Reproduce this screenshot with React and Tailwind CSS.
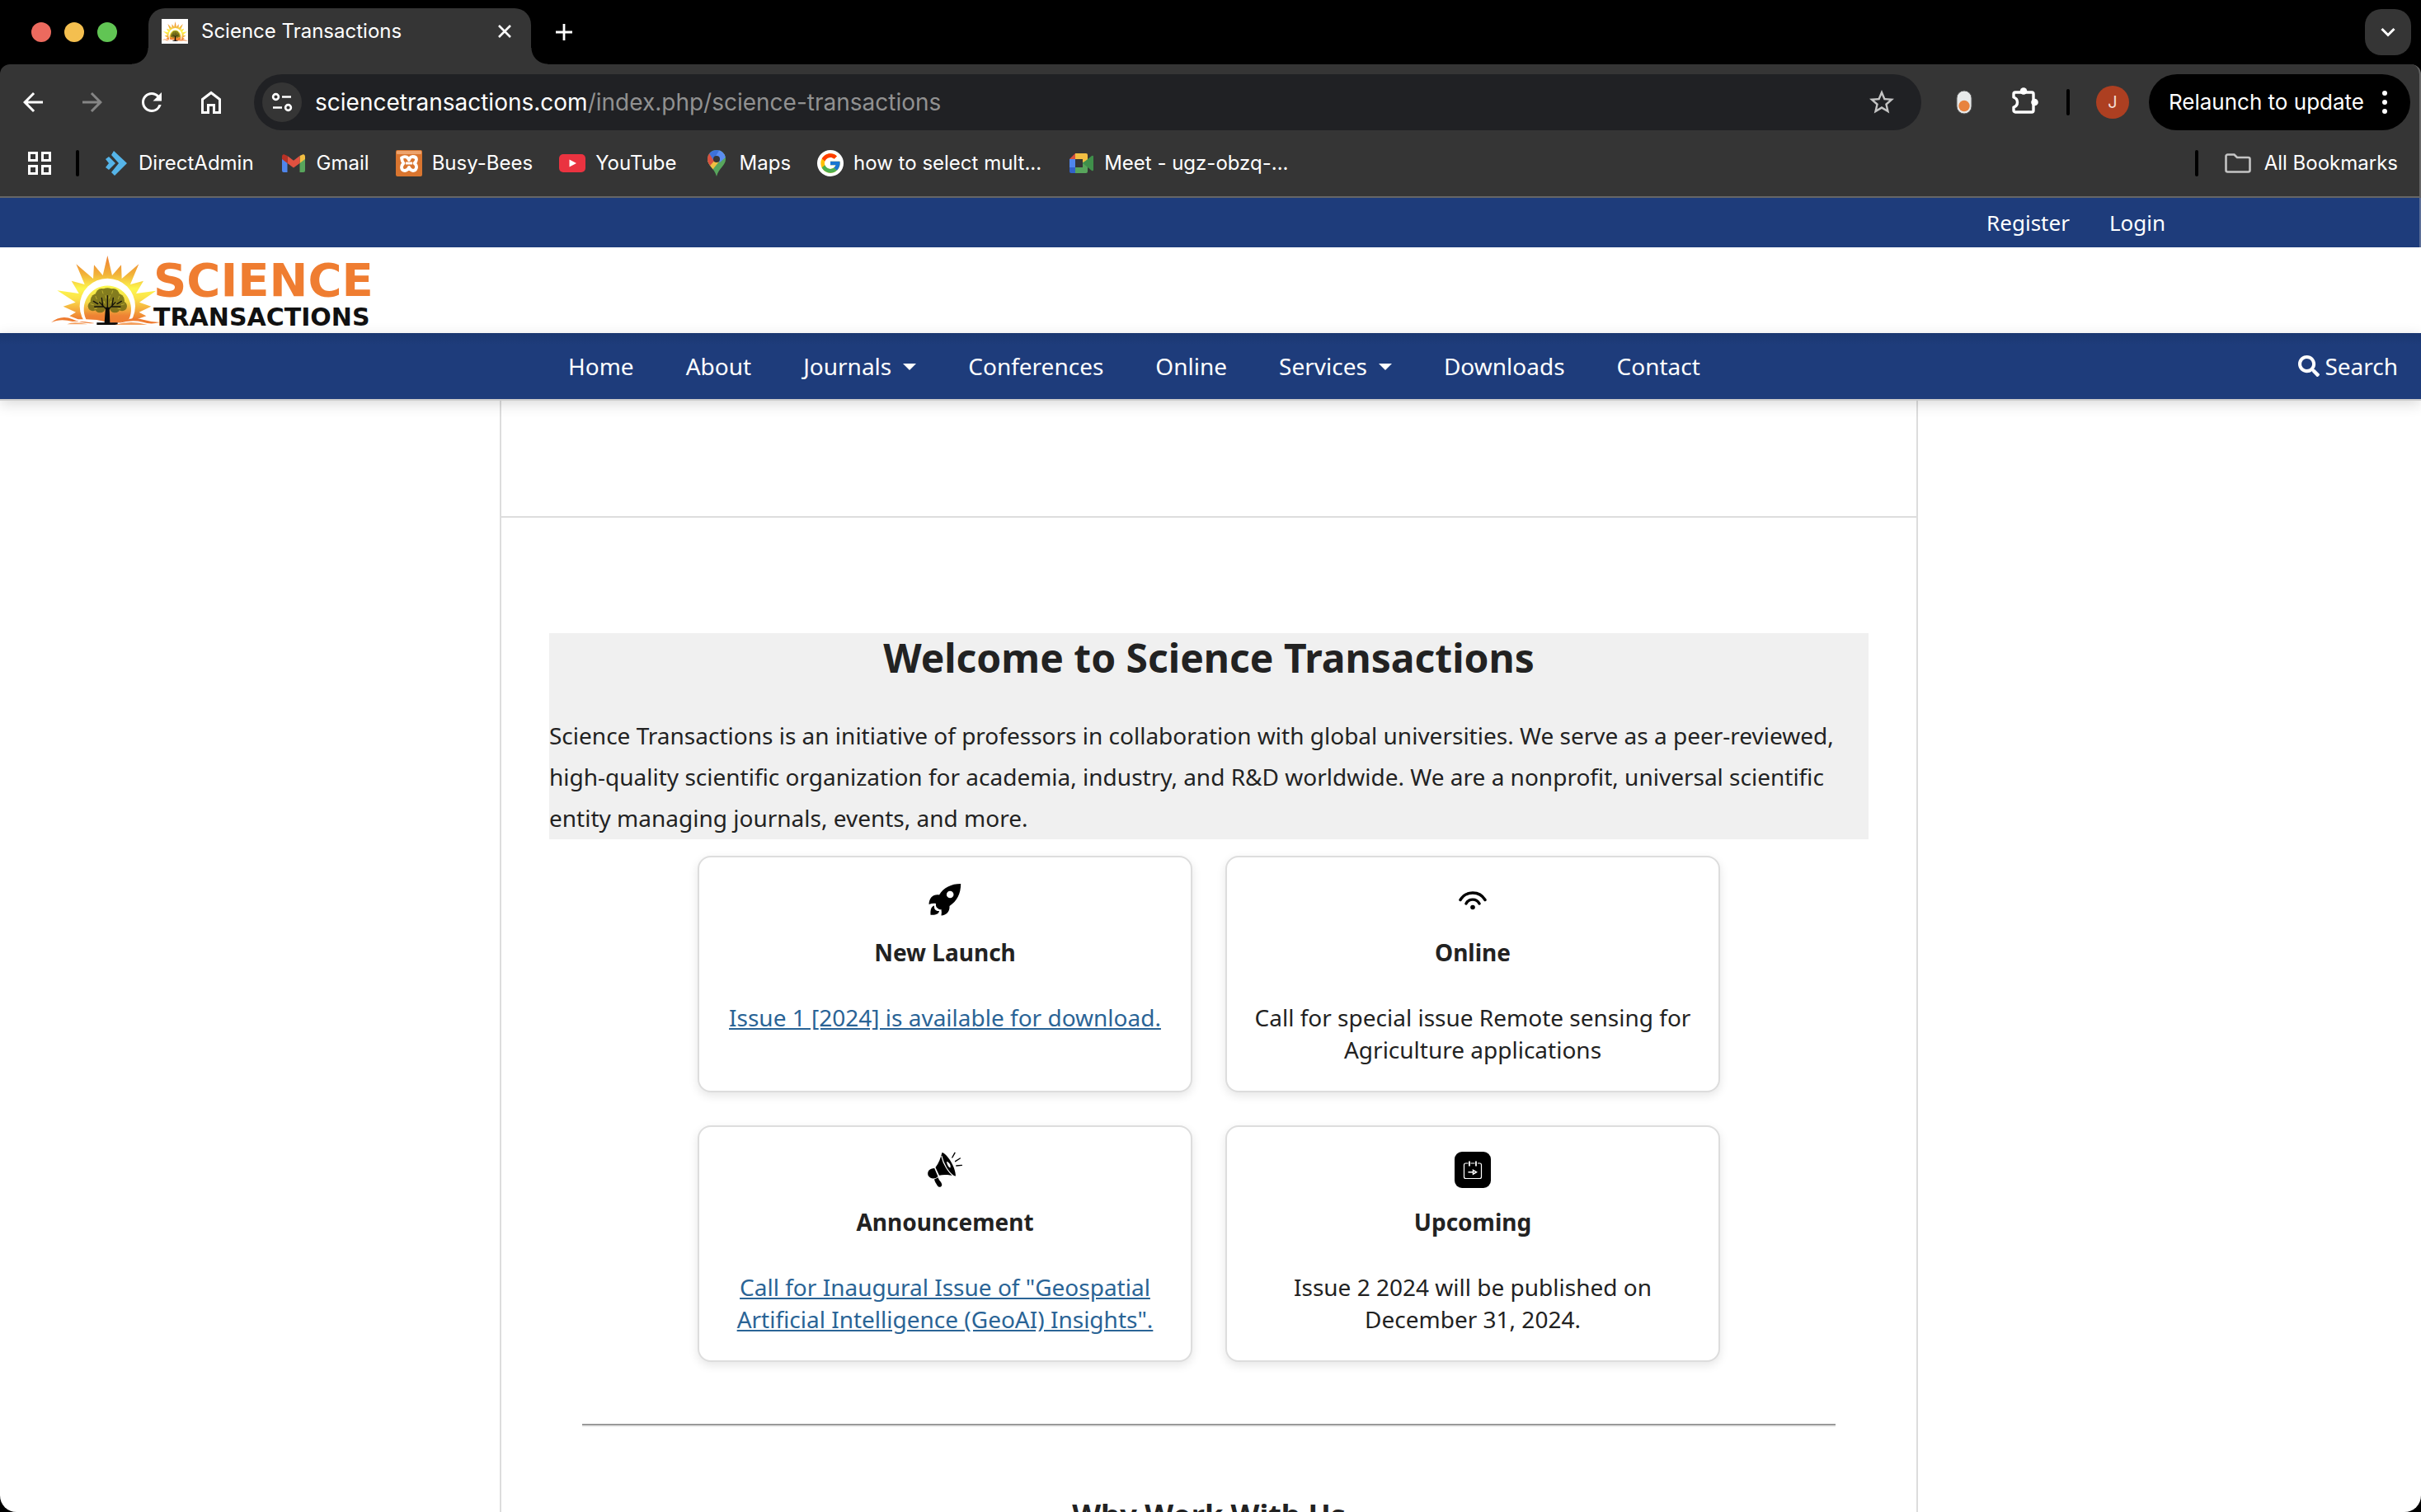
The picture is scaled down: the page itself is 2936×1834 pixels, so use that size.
import React from "react";
import { MdArrowBack, MdArrowForward, MdRefresh, MdStarOutline } from "react-icons/md";
import { FcGoogle } from "react-icons/fc";
import { FaSearch } from "react-icons/fa";

/* ---------- Brand drawings ---------- */

function SunTree({ className, id }) {
  return (
    <svg viewBox="38 30 396 252" preserveAspectRatio="none" className={className} aria-hidden="true">
      <defs>
        <linearGradient id={`${id}-rays`} x1="0" y1="0" x2="0" y2="1">
          <stop offset="0" stopColor="#ef7d31" />
          <stop offset="0.3" stopColor="#f2b43a" />
          <stop offset="0.52" stopColor="#fdf74d" />
          <stop offset="0.68" stopColor="#fbe04a" />
          <stop offset="1" stopColor="#ee7b30" />
        </linearGradient>
        <linearGradient id={`${id}-disc`} x1="0" y1="0" x2="0" y2="1">
          <stop offset="0" stopColor="#fbf84c" />
          <stop offset="0.45" stopColor="#f3d745" />
          <stop offset="0.8" stopColor="#ee8334" />
          <stop offset="1" stopColor="#ee7b30" />
        </linearGradient>
      </defs>
      <path
        fill={`url(#${id}-rays)`}
        d="M105 250 L128 236 L82 215 L127 200 L60 157 L139 168 L112 122 L160 135 L129 61 L191 114 L194 64 L226 102 L243 30 L260 102 L293 64 L295 114 L357 61 L326 135 L374 122 L347 168 L420 158 L359 200 L402 215 L358 236 L384 250 L350 262 L136 262 Z"
      />
      <circle cx="243" cy="214" r="101" fill="#fff" />
      <path d="M165 262 A86 86 0 1 1 321 262 Q282 282 243 272 Q204 262 165 262 Z" fill={`url(#${id}-disc)`} />
      <g fill="#6f6a17" opacity="0.85">
        <circle cx="243" cy="184" r="36" />
        <circle cx="208" cy="194" r="27" />
        <circle cx="278" cy="194" r="27" />
        <circle cx="190" cy="214" r="18" />
        <circle cx="296" cy="214" r="18" />
        <circle cx="222" cy="172" r="22" />
        <circle cx="264" cy="172" r="22" />
        <circle cx="216" cy="218" r="20" />
        <circle cx="270" cy="218" r="20" />
      </g>
      <g stroke="#e9d53f" strokeWidth="3" opacity="0.55" strokeLinecap="round">
        <path d="M200 178l4 10M224 158l3 10M262 158l-3 10M286 178l-4 10M182 206l10 3M304 206l-10 3M212 200l7 8M274 200l-7 8M236 176l3 10M252 176l-3 10M196 224l9-2M290 224l-9-2M230 196l3 8M256 196l-3 8" />
      </g>
      <g stroke="#15130a" fill="none" strokeLinecap="round">
        <path strokeWidth="4" d="M242 228 L214 200 M244 228 L272 200 M243 226 V176 M230 216 L196 216 M256 216 L290 216 M226 212 L222 184 M260 212 L264 184 M208 206 L192 196 M278 206 L294 196" />
      </g>
      <path d="M236 218 h14 l2 56 h28 v8 h-76 v-8 h28 z" fill="#0b0a08" />
      <path d="M38 274 Q74 244 116 262 T196 276 Q150 268 116 270 Q70 258 38 274 Z" fill="#ee7b30" />
      <path d="M284 276 Q330 250 376 264 Q402 272 434 273 Q400 282 372 272 Q330 262 284 276 Z" fill="#ee7b30" />
      <path d="M96 280 Q120 268 170 280 Z M270 282 Q330 264 388 282 Z" fill="#f4a05f" />
    </svg>
  );
}

/* ---------- Browser icons ---------- */

const ChromeHome = () => (
  <svg viewBox="0 0 32 32" className="h-8 w-8" fill="none" stroke="currentColor" strokeWidth="3" aria-hidden="true">
    <path d="M5.500 12.500 L16 4.500 L26.500 12.500 V28.500 H19.500 V19.500 H12.500 V28.500 H5.500 Z" />
  </svg>
);

const SiteSettings = () => (
  <svg viewBox="0 0 28 28" className="h-7 w-7" fill="none" stroke="currentColor" strokeWidth="2.6" aria-hidden="true">
    <circle cx="6.500" cy="7.500" r="3.400" />
    <path d="M14 7.500h11M3 20.500h11" />
    <circle cx="21.500" cy="20.500" r="3.400" />
  </svg>
);

const Puzzle = () => (
  <svg viewBox="0 0 36 36" className="h-9 w-9" aria-hidden="true">
    <path
      d="M4 24 C10 22 10 14 4 12 V8 a2 2 0 0 1 2-2 H26 a2 2 0 0 1 2 2 V28 a2 2 0 0 1 -2 2 H6 a2 2 0 0 1 -2-2 Z"
      fill="none" stroke="currentColor" strokeWidth="3.4" strokeLinejoin="round"
    />
    <circle cx="16" cy="4.500" r="4.300" fill="currentColor" />
    <circle cx="29.500" cy="18" r="4.300" fill="currentColor" />
  </svg>
);

const Capsule = () => (
  <svg viewBox="0 0 20 32" className="h-8 w-5" aria-hidden="true">
    <rect x="1" y="2" width="18" height="28" rx="9" fill="#e8eaea" stroke="#5a5a5a" />
    <circle cx="10" cy="20.500" r="6.700" fill="#e8833f" />
  </svg>
);

const AppsGrid = () => (
  <svg viewBox="0 0 28 28" className="h-7 w-7" fill="none" stroke="currentColor" strokeWidth="3" aria-hidden="true">
    <path d="M1.500 1.500h9v9h-9zM17.500 1.500h9v9h-9zM1.500 17.500h9v9h-9zM17.500 17.500h9v9h-9z" />
  </svg>
);

const DirectAdminIcon = () => (
  <svg viewBox="0 0 32 32" className="h-8 w-8" fill="#55b4e8" aria-hidden="true">
    <path d="M14 1 L30 16 L15 31 L11 27 L20 16 L11 6 Z" />
    <path d="M8 8 L16 16 L8 24 L4 21 L8 16 L4 11 Z" />
  </svg>
);

const GmailIcon = () => (
  <svg viewBox="0 0 32 32" className="h-8 w-8" aria-hidden="true">
    <path d="M2 10 V25 a2 2 0 0 0 2 2 H8.500 V15 Z" fill="#4f86ec" />
    <path d="M30 10 V25 a2 2 0 0 1 -2 2 H23.500 V15 Z" fill="#58a55c" />
    <path d="M23.500 7 L27 5.500 C28.500 4.500 30 6 30 8 V11 L23.500 16 Z" fill="#f2be42" />
    <path d="M8.500 7 L16 12.800 L23.500 7 V16 L16 21.500 L8.500 16 Z" fill="#e05140" />
    <path d="M8.500 7 L5 5.500 C3.500 4.500 2 6 2 8 V11 L8.500 16 Z" fill="#b93125" />
  </svg>
);

const BusyBeesIcon = () => (
  <svg viewBox="0 0 32 32" className="h-8 w-8" aria-hidden="true">
    <rect width="32" height="32" rx="2" fill="#d9752f" />
    <rect x="1" y="1" width="30" height="4" rx="1" fill="#eda36c" />
    <path
      d="M7 9.500 Q10 7.500 13 8.500 Q15 9.500 16 12 Q17 8.500 20 8 Q25 8 25 11.500 Q25 14 22.500 16 Q25.500 18 25 21.500 Q24 25 21 25 Q18 25 16 21 Q14 25 11 25 Q7.500 25 7 21.500 Q7 18 9.500 16 Q7.500 14 7 9.500"
      fill="none" stroke="#fff" strokeWidth="3.800" strokeLinecap="round" strokeLinejoin="round"
    />
    <path d="M12 16 H20" stroke="#fff" strokeWidth="3" />
  </svg>
);

const YouTubeIcon = () => (
  <svg viewBox="0 0 32 32" className="h-8 w-8" aria-hidden="true">
    <rect y="5" width="32" height="22" rx="5" fill="#ea3340" />
    <path d="M12.500 11.500 L21 16 L12.500 20.500 Z" fill="#fff" />
  </svg>
);

const MapsIcon = () => (
  <svg viewBox="0 0 32 32" className="h-8 w-8" aria-hidden="true">
    <clipPath id="map-pin">
      <path d="M16 0 C22 0 27 4.500 27 11 C27 19 19 21 16 32 C13 21 5 19 5 11 C5 4.500 10 0 16 0 Z" />
    </clipPath>
    <g clipPath="url(#map-pin)">
      <rect width="32" height="32" fill="#58a55c" />
      <path d="M4 22 L4 14 L13 9 L27 4 L11 24 Z" fill="#f2be42" />
      <path d="M0 16 L0 4 L8 3 L16 10 L8 19 Z" fill="#d85040" />
      <path d="M7 4 L12 -2 L22 0 L12 12 Z" fill="#3d72d9" />
      <path d="M20 -1 L30 6 L20 15 L14 9 Z" fill="#5b8df0" />
    </g>
    <circle cx="16" cy="11" r="4" fill="#353535" />
  </svg>
);

const MeetIcon = () => (
  <svg viewBox="0 0 32 32" className="h-8 w-8" aria-hidden="true">
    <path d="M9 4 V11 H2 Z" fill="#d85040" />
    <path d="M2 11 h7 v10 h-7z" fill="#4f86ec" />
    <path d="M2 21 h7 v7 h-5 a2 2 0 0 1 -2 -2z" fill="#3161c9" />
    <path d="M9 4 h13 a2 2 0 0 1 2 2 v7 l-6 4 v-6 h-9z" fill="#f2be42" />
    <path d="M9 21 h9 v-6 l6 -3 v14 a2 2 0 0 1 -2 2 h-13z" fill="#58a55c" />
    <path d="M18 16 L29 7 Q31 6 31 8 V24 Q31 26 29 25 Z" fill="#3f8f4a" />
  </svg>
);

const GoogleIcon = () => (
  <span className="flex h-8 w-8 items-center justify-center rounded-full bg-white">
    <FcGoogle className="h-7 w-7" />
  </span>
);

const FolderIcon = () => (
  <svg viewBox="0 0 32 24" className="h-6 w-8" fill="none" stroke="#c4c4c4" strokeWidth="2.600" aria-hidden="true">
    <path d="M3.500 1.500 H11.500 L15 5 H28.500 a2 2 0 0 1 2 2 V20.500 a2 2 0 0 1 -2 2 H3.500 a2 2 0 0 1 -2 -2 V3.500 a2 2 0 0 1 2 -2 Z" />
  </svg>
);

/* ---------- Card icons ---------- */

const Rocket = () => (
  <svg viewBox="0 0 44 44" className="h-11 w-11" aria-hidden="true">
    <g transform="translate(2.500 2)">
      <path
        fillRule="evenodd"
        d="M38.700 0 C27 0 18 4.500 12.500 13.500 C5 12.500 .5 17 0 25 C3 23.800 6 23.500 8.500 24 C8 27 9 28.500 10.500 29.500 C12 31 13 31.500 15 31 C15.500 33.500 15.500 36 15 38.500 C21 38 25.500 34 25 27 C34 21 38.700 12 38.700 0 Z M25.700 8.700 a4.300 4.300 0 1 1 0 8.600 a4.300 4.300 0 1 1 0 -8.600 Z"
      />
      <path d="M6.500 26.500 C3 27.500 1.500 31 2 37.700 C8.500 38.200 12 36.500 12.500 33 C8.500 33.500 6 31 6.500 26.500 Z" />
    </g>
  </svg>
);

const Wifi = () => (
  <svg viewBox="0 0 44 44" className="h-11 w-11" fill="none" stroke="#000" strokeWidth="3.400" strokeLinecap="round" aria-hidden="true">
    <path d="M7 21.500 A17.500 17.500 0 0 1 37 21.500" />
    <path d="M14 26 A9 9 0 0 1 30 26" />
    <circle cx="22" cy="30.500" r="2.800" fill="#000" stroke="none" />
  </svg>
);

const Megaphone = () => (
  <svg viewBox="0 0 44 44" className="h-11 w-11" aria-hidden="true">
    <path d="M18.500 1 C24 2 35 18 35 29.500 C28 28 20 27.500 15 28.700 L10.500 19 C14.500 14 16.500 8 18.500 1 Z" />
    <path d="M17.800 5 C20 15 26 25 32.500 29.500" fill="none" stroke="#fff" strokeWidth="1.200" />
    <path d="M24 12 C27 12.500 29.500 16 28.500 19.500 C26.500 19 24.500 16 24 12 Z" fill="#fff" />
    <path d="M9.200 20 L13.500 30 C10 34 3.500 33 1.500 28.500 C0 24 3.500 20 9.200 20 Z" />
    <path d="M9 33.500 L13.800 31.300 C14 34.500 18.500 37 18.300 40.500 C17.500 43.500 14 43.500 12.700 41 C11.500 38.500 9.500 36.500 9 33.500 Z" />
    <path d="M34 1.300 L30.800 7 M40.300 8 L34.600 11.700 M42.400 16.400 L35.800 17" stroke="#000" strokeWidth="1.400" strokeLinecap="round" />
  </svg>
);

const CalendarNext = () => (
  <svg viewBox="0 0 44 44" className="h-11 w-11" fill="none" stroke="#fff" aria-hidden="true">
    <rect width="44" height="44" rx="9" fill="#000" stroke="none" />
    <path strokeWidth="1.200" d="M16.500 14 H13.500 a2 2 0 0 0 -2 2 V30.500 a2 2 0 0 0 2 2 H30.500 a2 2 0 0 0 2 -2 V16 a2 2 0 0 0 -2 -2 H28 M19.500 14 H24.500" />
    <path strokeWidth="1.800" d="M18 11.500 V17.500 M26 11.500 V17.500" />
    <path strokeWidth="1.500" d="M16.500 24.700 H22.500 M22.500 22.300 L26.500 24.700 L22.500 27.100 Z" />
  </svg>
);

/* ---------- Browser chrome ---------- */

const bookmarks = [
  { label: "DirectAdmin", Icon: DirectAdminIcon },
  { label: "Gmail", Icon: GmailIcon },
  { label: "Busy-Bees", Icon: BusyBeesIcon },
  { label: "YouTube", Icon: YouTubeIcon },
  { label: "Maps", Icon: MapsIcon },
  { label: "how to select mult...", Icon: GoogleIcon },
  { label: "Meet - ugz-obzq-...", Icon: MeetIcon },
];

function TabStrip() {
  return (
    <div className="flex h-[78px] items-center pr-3">
      <div className="flex gap-4 pl-[38px]">
        <button aria-label="Close window" className="h-6 w-6 rounded-full bg-[#ec6a5e]" />
        <button aria-label="Minimize window" className="h-6 w-6 rounded-full bg-[#f4bf4f]" />
        <button aria-label="Zoom window" className="h-6 w-6 rounded-full bg-[#61c554]" />
      </div>
      <div className="relative ml-[38px] flex h-[68px] w-[464px] items-center self-end rounded-t-[20px] bg-[#353535] px-4 pb-3">
        <span className="absolute bottom-0 -left-5 h-5 w-5 bg-[radial-gradient(circle_at_0_0,transparent_19px,#353535_20px)]" />
        <span className="absolute -right-5 bottom-0 h-5 w-5 bg-[radial-gradient(circle_at_100%_0,transparent_19px,#353535_20px)]" />
        <span className="flex h-[30px] w-8 items-center bg-white">
          <SunTree id="favicon" className="h-6 w-8" />
        </span>
        <span className="ml-4 flex-1 text-2xl">Science Transactions</span>
        <button aria-label="Close tab" className="flex h-8 w-8 items-center justify-center">
          <svg viewBox="0 0 16 16" className="h-4 w-4" stroke="currentColor" strokeWidth="2.600" aria-hidden="true">
            <path d="M1 1 L15 15 M15 1 L1 15" />
          </svg>
        </button>
      </div>
      <button aria-label="New tab" className="ml-5 flex h-10 w-10 items-center justify-center">
        <svg viewBox="0 0 20 20" className="h-5 w-5" stroke="currentColor" strokeWidth="2.800" aria-hidden="true">
          <path d="M10 0 V20 M0 10 H20" />
        </svg>
      </button>
      <button aria-label="Search tabs" className="ml-auto flex h-14 w-14 items-center justify-center rounded-[20px] bg-[#353535]">
        <svg viewBox="0 0 18 12" className="h-3 w-[18px]" fill="none" stroke="currentColor" strokeWidth="3" aria-hidden="true">
          <path d="M1.500 2 L9 9.500 L16.500 2" />
        </svg>
      </button>
    </div>
  );
}

function Toolbar() {
  const nav = "flex h-12 w-12 items-center justify-center";
  return (
    <div className="flex h-[92px] items-center pr-[11px] pl-4">
      <div className="flex gap-6">
        <button aria-label="Back" className={nav}><MdArrowBack className="h-9 w-9" /></button>
        <button aria-label="Forward" className="flex h-12 w-12 items-center justify-center text-[#858585]"><MdArrowForward className="h-9 w-9" /></button>
        <button aria-label="Reload" className={nav}><MdRefresh className="h-9 w-9" /></button>
        <button aria-label="Home page" className={nav}><ChromeHome /></button>
      </div>
      <div className="ml-7 flex h-[68px] min-w-0 flex-1 items-center rounded-full bg-[#202124] pr-6 pl-[10px] text-[28px] leading-9">
        <button aria-label="View site information" className="flex h-12 w-12 items-center justify-center rounded-full bg-[#353535]">
          <SiteSettings />
        </button>
        <input aria-label="Site address" defaultValue="sciencetransactions.com" className="ml-4 field-sizing-content bg-transparent outline-none" />
        <input aria-label="Page path" defaultValue="/index.php/science-transactions" className="min-w-0 flex-1 bg-transparent text-[#919191] outline-none" />
        <button aria-label="Bookmark this tab" className="flex h-12 w-12 items-center justify-center text-[#c4c4c4]">
          <MdStarOutline className="h-9 w-9" />
        </button>
      </div>
      <button aria-label="Extension" className="ml-7 flex h-12 w-12 items-center justify-center"><Capsule /></button>
      <button aria-label="Extensions" className="ml-[26px] flex h-12 w-12 items-center justify-center"><Puzzle /></button>
      <span className="ml-[26px] h-8 w-1 rounded-full bg-black" />
      <button aria-label="Profile" className="ml-8 h-10 w-10 rounded-full bg-[#ad3f21] text-xl leading-10 text-[#f3dcd4]">J</button>
      <button className="ml-6 flex h-[68px] items-center gap-[22px] rounded-full bg-black pr-7 pl-6 text-[26px] leading-9 whitespace-nowrap">
        Relaunch to update
        <svg viewBox="0 0 6 30" className="h-[30px] w-[6px]" fill="currentColor" aria-hidden="true">
          <circle cx="3" cy="4" r="3" /><circle cx="3" cy="15" r="3" /><circle cx="3" cy="26" r="3" />
        </svg>
      </button>
    </div>
  );
}

function BookmarksBar() {
  return (
    <div className="flex h-[68px] items-center pr-[26px] pb-3 pl-[34px] text-2xl whitespace-nowrap">
      <button aria-label="Apps"><AppsGrid /></button>
      <span className="ml-[30px] h-8 w-1 rounded-full bg-black" />
      <nav aria-label="Bookmarks" className="ml-7 flex gap-8">
        {bookmarks.map(({ label, Icon }) => (
          <a key={label} href="#" className="flex items-center gap-3">
            <Icon />
            {label}
          </a>
        ))}
      </nav>
      <span className="ml-auto h-8 w-1 rounded-full bg-black" />
      <button className="ml-8 flex items-center gap-4">
        <FolderIcon />
        All Bookmarks
      </button>
    </div>
  );
}

/* ---------- Web page ---------- */

const menu = [
  { label: "Home" },
  { label: "About" },
  { label: "Journals", more: true },
  { label: "Conferences" },
  { label: "Online" },
  { label: "Services", more: true },
  { label: "Downloads" },
  { label: "Contact" },
];

function SiteHeader() {
  return (
    <header className="relative">
      <div className="flex h-[60px] items-center justify-end gap-12 border-r-2 border-[#5c6f98] bg-[#1e3c7b] pr-[308px] text-[26px] text-white">
        <a href="#">Register</a>
        <a href="#">Login</a>
      </div>
      <a href="#" aria-label="Science Transactions" className="flex h-[104px] items-start bg-white pl-[62px]">
        <SunTree id="logo" className="mt-[10px] h-[84px] w-[132px]" />
        <span className="-ml-2 flex flex-col pt-3 font-['DejaVu_Sans',sans-serif] font-bold">
          <span className="text-[56px] leading-[56px] text-[#ef7d31]">SCIENCE</span>
          <span className="text-[30px] leading-[34px] text-[#111]">TRANSACTIONS</span>
        </span>
      </a>
      <div className="grid h-[82px] grid-cols-[1fr_minmax(0,1720px)_1fr] items-center border-b-2 border-[#ccc] bg-[#1e3c7b] bg-[linear-gradient(#1b3770,#1e3c7b_14px)] pr-1 text-[28px] text-white shadow-[0_4px_16px_rgba(0,0,0,0.15)]">
        <nav aria-label="Main" className="col-start-2 flex gap-[63px] pl-[83px] whitespace-nowrap">
          {menu.map(({ label, more }) => (
            <a key={label} href="#" className="flex items-center gap-[14px]">
              {label}
              {more && (
                <svg viewBox="0 0 16 8" className="mt-[2px] h-2 w-4" fill="currentColor" aria-hidden="true">
                  <path d="M0 0 H16 L8 8 Z" />
                </svg>
              )}
            </a>
          ))}
        </nav>
        <a href="#" className="flex items-center justify-end gap-[6px] pr-6">
          <FaSearch className="h-[26px] w-[26px]" />
          Search
        </a>
      </div>
    </header>
  );
}

const cards = [
  { title: "New Launch", Icon: Rocket, text: "Issue 1 [2024] is available for download.", link: true },
  { title: "Online", Icon: Wifi, text: "Call for special issue Remote sensing for Agriculture applications" },
  { title: "Announcement", Icon: Megaphone, text: 'Call for Inaugural Issue of "Geospatial Artificial Intelligence (GeoAI) Insights".', link: true },
  { title: "Upcoming", Icon: CalendarNext, text: "Issue 2 2024 will be published on December 31, 2024." },
];

function Card({ title, Icon, text, link }) {
  return (
    <section className="flex flex-col items-center rounded-[16px] border-2 border-[#ddd] bg-white p-[30px] text-center text-[28px] shadow-[0_4px_12px_rgba(0,0,0,0.1)]">
      <Icon />
      <h3 className="mt-5 leading-[42px] font-bold">{title}</h3>
      <p className="mt-[39px] leading-[39px]">
        {link ? <a href="#" className="text-[#2a6496] underline">{text}</a> : text}
      </p>
    </section>
  );
}

export default function App() {
  return (
    <div className="h-screen overflow-hidden bg-black">
      <div className="flex h-full flex-col overflow-hidden rounded-[20px]">
        <div className="font-['Inter',sans-serif] text-white">
          <TabStrip />
          <div className="rounded-t-[12px] border-r-2 border-b-2 border-[#666] bg-[#353535]">
            <Toolbar />
            <BookmarksBar />
          </div>
        </div>
        <div className="flex min-h-0 flex-1 flex-col bg-white font-['Noto_Sans',sans-serif] text-[#222]">
          <SiteHeader />
          <div className="min-h-0 flex-1 overflow-hidden pr-1">
            <main className="mx-auto h-full max-w-[1720px] border-x-2 border-[#ddd]">
              <div className="h-[142px] border-b-2 border-[#ddd]" />
              <article className="px-[58px] pt-[140px]">
                <div className="bg-[#f0f0f0] pb-px">
                  <h1 className="text-center text-5xl leading-[60px] font-bold">Welcome to Science Transactions</h1>
                  <p className="mt-[39px] text-[28px] leading-[50px]">
                    Science Transactions is an initiative of professors in collaboration with global universities. We serve as a peer-reviewed,
                    high-quality scientific organization for academia, industry, and R&amp;D worldwide. We are a nonprofit, universal scientific
                    entity managing journals, events, and more.
                  </p>
                </div>
                <div className="mx-auto mt-5 grid max-w-[1240px] grid-cols-2 gap-10">
                  {cards.map((c) => <Card key={c.title} {...c} />)}
                </div>
                <hr className="mx-10 mt-[75px] border-t-2 border-b-2 border-t-[#999] border-b-[#eee]" />
                <h2 className="mt-[77px] text-center text-4xl leading-[60px] font-bold">Why Work With Us</h2>
              </article>
            </main>
          </div>
        </div>
      </div>
    </div>
  );
}
